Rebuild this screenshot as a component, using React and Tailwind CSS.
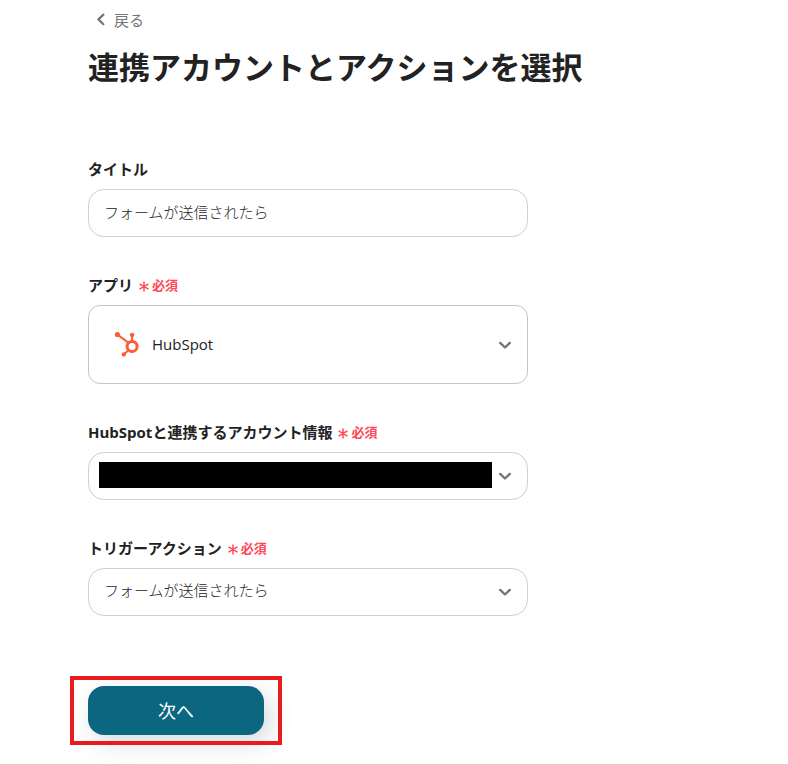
function ChevronDown() {
  return (
    <svg
      className="pointer-events-none absolute top-1/2 right-4 -translate-y-1/2"
      width="14"
      height="10"
      viewBox="0 0 14 10"
      fill="none"
      stroke="#757575"
      strokeWidth="2.4"
      strokeLinecap="round"
      strokeLinejoin="round"
      aria-hidden="true"
    >
      <path d="M2.2 2.9 7 7.5l4.8-4.6" />
    </svg>
  );
}

function HubSpotIcon() {
  return (
    <svg
      className="pointer-events-none absolute top-1/2 left-6 -translate-y-1/2"
      width="28"
      height="28"
      viewBox="0 0 28 28"
      fill="none"
      stroke="#ff5c35"
      aria-hidden="true"
    >
      <circle cx="20.1" cy="15.4" r="5" strokeWidth="3" />
      <path d="M5.4 3.6 16 11.4M20.1 4.5v6M12 23.4l4.4-4.2" strokeWidth="2" />
      <g fill="#ff5c35" stroke="none">
        <circle cx="5.4" cy="3.5" r="2.6" />
        <circle cx="20.1" cy="4" r="2.2" />
        <circle cx="11.8" cy="23.4" r="2.2" />
      </g>
    </svg>
  );
}

function RequiredMark() {
  return (
    <span className="ml-1.5 inline-flex items-center gap-[3px] pt-px text-[13px] font-bold text-[#ff4757]">
      <svg width="10" height="12" viewBox="0 0 10 12" stroke="currentColor" strokeWidth="1.5" strokeLinecap="round" aria-hidden="true">
        <path d="M5 2v9M1 4.2l8 4.6M9 4.2 1 8.8" />
      </svg>
      必須
    </span>
  );
}

function Field({ id, label, required, children }) {
  return (
    <div>
      <label htmlFor={id} className="flex h-6 items-center text-[15px] font-bold text-[#222]">
        {label}
        {required && <RequiredMark />}
      </label>
      <div className="relative mt-2">{children}</div>
    </div>
  );
}

export default function App() {
  return (
    <main className="min-h-screen bg-white pt-2 pr-6 pb-7 pl-22 font-['Open_Sans','Noto_Sans_CJK_JP',sans-serif] text-[#222]">
      <a href="#back" className="ml-2 inline-flex h-6 items-center gap-2 text-[15px] text-[#757575]">
        <svg width="10" height="14" viewBox="0 0 10 14" fill="none" stroke="currentColor" strokeWidth="2.2" strokeLinecap="round" strokeLinejoin="round" aria-hidden="true">
          <path d="M7.4 1.6 2.4 6.4l5 4.8" />
        </svg>
        戻る
      </a>
      <h1 className="mt-2.5 text-[31px] leading-12 font-bold">連携アカウントとアクションを選択</h1>

      <form className="mt-[66px] w-full max-w-[440px]" onSubmit={(e) => e.preventDefault()}>
        <div className="flex flex-col gap-9">
          <Field id="title" label="タイトル">
            <input
              id="title"
              type="text"
              defaultValue="フォームが送信されたら"
              className="block h-12 w-full rounded-2xl border border-[#cbd0da] bg-white px-[15px] pb-1 text-[15px] font-light text-[#212529]"
            />
          </Field>

          <Field id="app" label="アプリ" required>
            <HubSpotIcon />
            <select
              id="app"
              className="block h-[79px] w-full appearance-none rounded-xl border border-[#c4c4c4] bg-transparent pr-10 pl-[63px] text-[15px] text-[#222]"
            >
              <option>HubSpot</option>
            </select>
            <ChevronDown />
          </Field>

          <Field id="account" label="HubSpotと連携するアカウント情報" required>
            <select
              id="account"
              className="block h-12 w-full appearance-none rounded-2xl border border-[#cbd0da] bg-white px-[15px] text-[15px]"
            >
              <option></option>
            </select>
            <div className="pointer-events-none absolute top-2.5 right-9 left-[11px] h-[26px] bg-black" />
            <ChevronDown />
          </Field>

          <Field id="trigger" label="トリガーアクション" required>
            <select
              id="trigger"
              className="block h-12 w-full appearance-none rounded-2xl border border-[#cbd0da] bg-white px-[15px] pb-1 text-[15px] font-light text-[#212529]"
            >
              <option>フォームが送信されたら</option>
            </select>
            <ChevronDown />
          </Field>
        </div>

        <div className="relative mt-[70px] w-44">
          <button
            type="submit"
            className="block h-[49px] w-full rounded-2xl bg-[#0b6680] text-lg text-white shadow-[6px_8px_24px_rgba(52,73,94,0.2)]"
          >
            次へ
          </button>
          <div className="pointer-events-none absolute -inset-x-[18px] -inset-y-2.5 border-4 border-[#e81c1e]" />
        </div>
      </form>
    </main>
  );
}
